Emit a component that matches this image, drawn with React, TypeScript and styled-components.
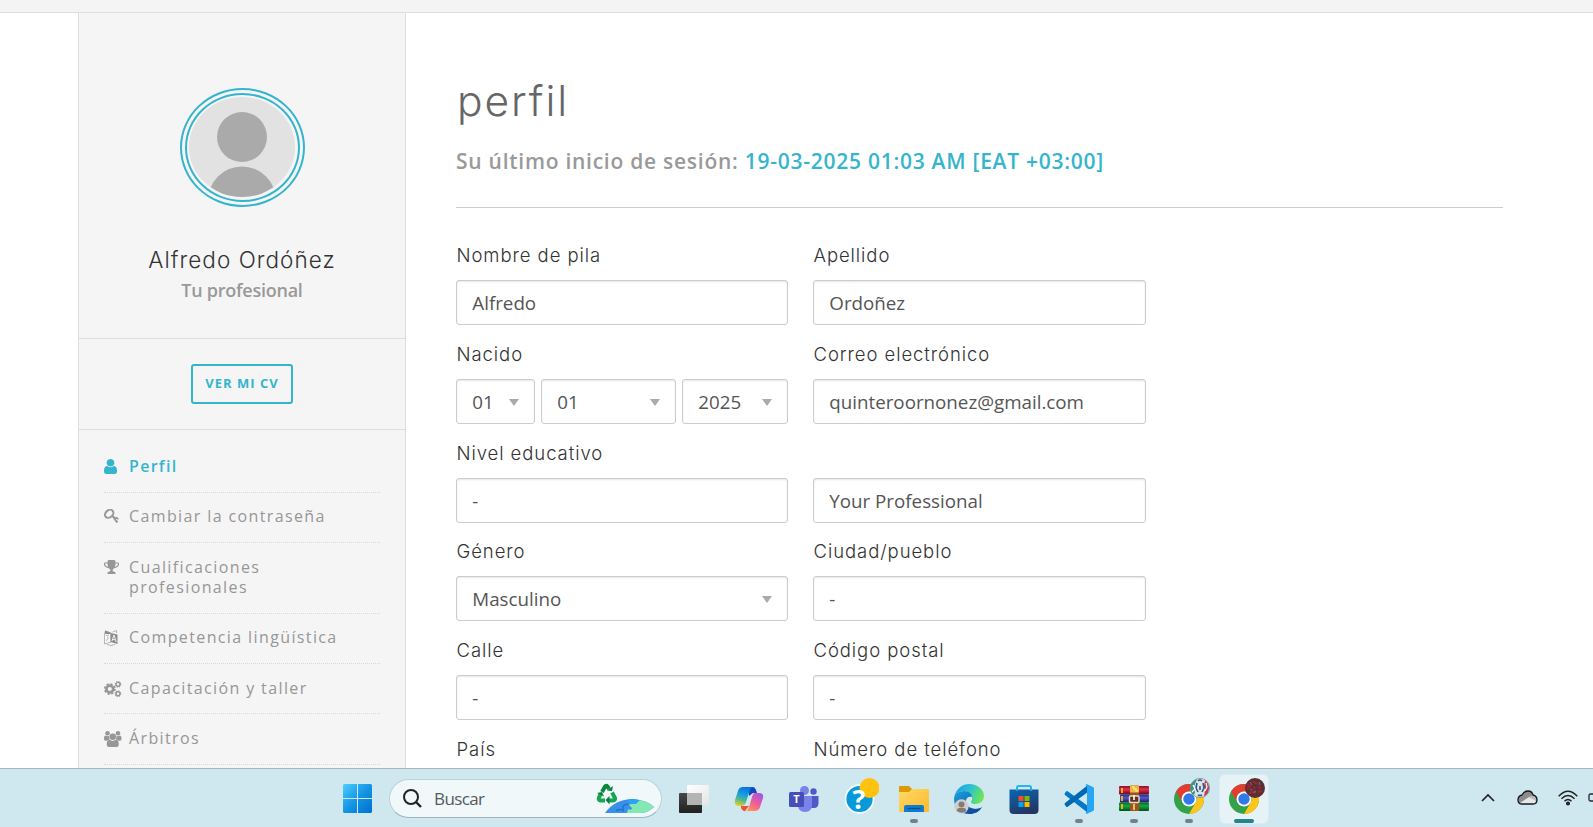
import React from "react";
import styled, { createGlobalStyle } from "styled-components";

const accent = "#35b5cd";
const line = "#dedede";
const display = `Inter, "Open Sans", sans-serif`;

const GlobalStyle = createGlobalStyle`
  * { box-sizing: border-box; }
  body { margin: 0; background: #fff; font-family: "Open Sans", "Noto Sans", sans-serif; overflow: hidden; }
  svg { display: block; flex: none; }
`;

const Screen = styled.div`
  display: flex;
  flex-direction: column;
  width: 1593px;
  height: 827px;
  overflow: hidden;
`;

const TopStrip = styled.header`
  flex: none;
  height: 13px;
  background: #f4f4f4;
  border-bottom: 1px solid ${line};
`;

const Page = styled.div`
  flex: 1;
  min-height: 0;
  display: flex;
  overflow: hidden;
  padding-left: 78px;
`;

const Sidebar = styled.aside`
  flex: none;
  width: 328px;
  height: 800px;
  background: #f5f5f5;
  border: solid ${line};
  border-width: 0 1px;
`;

const ProfileCard = styled.section`
  height: 326px;
  padding-top: 75px;
  display: flex;
  flex-direction: column;
  align-items: center;
  border-bottom: 1px solid ${line};
`;

const OuterRing = styled.div`
  width: 125px;
  height: 119px;
  padding: 3px;
  border: 2px solid ${accent};
  border-radius: 50%;
`;

const InnerRing = styled.div`
  width: 115px;
  height: 109px;
  padding: 2px;
  border: 2px solid ${accent};
  border-radius: 50%;
`;

const PersonName = styled.h2`
  margin: 36px 0 0;
  font: 300 22.5px/34px ${display};
  letter-spacing: 1.03px;
  color: #333;
`;

const PersonRole = styled.p`
  margin: -1px 0 0;
  font-size: 18px;
  font-weight: 600;
  line-height: 28px;
  letter-spacing: -0.25px;
  color: #999;
`;

const CvSection = styled.section`
  height: 91px;
  display: flex;
  align-items: center;
  justify-content: center;
  border-bottom: 1px solid ${line};
`;

const CvButton = styled.button`
  width: 102px;
  height: 40px;
  padding: 0 0 2px;
  border: 2px solid ${accent};
  border-radius: 3px;
  background: transparent;
  color: ${accent};
  font: 700 13px/18px "Open Sans", sans-serif;
  letter-spacing: 1px;
  white-space: nowrap;
`;

const Menu = styled.nav`
  padding: 12.4px 25px 0;
`;

const MenuItem = styled.a<{ $active?: boolean }>`
  display: grid;
  grid-template-columns: 25px 1fr;
  align-items: start;
  padding: 13.6px 0 15.8px;
  border-bottom: 1px dotted #d8d8d8;
  color: ${(p) => (p.$active ? accent : "#979797")};
  font-size: 16px;
  line-height: 20px;
  font-weight: ${(p) => (p.$active ? 600 : 400)};
  letter-spacing: ${(p) => (p.$active ? 1.3 : 1.38)}px;
`;

const MenuIcon = styled.span`
  display: block;
  padding-top: 3px;
`;

const Main = styled.main`
  width: 1097px;
  padding: 62px 0 0 50px;
`;

const Title = styled.h1`
  margin: 0;
  padding-left: 1px;
  font: 300 42.5px/52px ${display};
  letter-spacing: 1.9px;
  color: #666;
`;

const LastLogin = styled.p`
  margin: 19px 0 0;
  font-size: 21px;
  line-height: 30px;
  font-weight: 600;
  letter-spacing: 0.74px;
  color: #999;
  white-space: nowrap;
`;

const LoginTime = styled.span`
  color: ${accent};
`;

const Rule = styled.hr`
  margin: 31px 0 0;
  border: 0;
  border-top: 1px solid #ccc;
`;

const Form = styled.form`
  display: grid;
  grid-template-columns: 332px 333px;
  column-gap: 25px;
  padding-top: 32px;
`;

const Field = styled.div<{ $short?: boolean }>`
  height: ${(p) => (p.$short ? 98 : 99)}px;
`;

const Label = styled.label`
  display: block;
  height: 40px;
  padding-left: 0.5px;
  font: 300 18.5px/30px ${display};
  letter-spacing: 0.93px;
  color: #333;
`;

const Group = styled.div`
  display: flex;
  gap: 6px;
`;

const Control = styled.div<{ $width?: number }>`
  display: flex;
  align-items: center;
  justify-content: space-between;
  width: ${(p) => (p.$width ? `${p.$width}px` : "100%")};
  height: 45px;
  padding: 0 15px 0 15.3px;
  border: 1px solid #ccc;
  border-radius: 3px;
  box-shadow: inset 0 1px 2px rgba(0, 0, 0, 0.1);
  color: #555;
  font-size: 18.75px;
  line-height: 26px;
`;

const Arrow = styled.span`
  margin-top: 2px;
  border: solid transparent;
  border-width: 7px 5px 0;
  border-top-color: #aaa;
`;

const Taskbar = styled.footer`
  flex: none;
  height: 59px;
  display: flex;
  align-items: center;
  padding: 1px 0 0 343px;
  background: #cfe7ee;
  border-top: 1px solid #a7b6bb;
`;

const SearchBox = styled.div`
  display: flex;
  align-items: center;
  width: 273.5px;
  height: 39px;
  margin: 0 4.5px 0 16.5px;
  padding: 0 6px 0 13.5px;
  border: 1px solid #b9d3da;
  border-bottom-color: #9eb4bb;
  border-radius: 20px;
  background: #f0f8fa;
`;

const SearchText = styled.span`
  flex: 1;
  padding-left: 12px;
  font: 400 17px/24px "Open Sans", sans-serif;
  letter-spacing: -0.6px;
  color: #555b5e;
`;

const Slot = styled.div`
  position: relative;
  flex: none;
  width: 55px;
  height: 48px;
  display: flex;
  align-items: center;
  justify-content: center;
`;

const ActiveTile = styled(Slot)`
  width: 48px;
  margin: 0 3.5px;
  border-radius: 5px;
  background: #e6f2f6;
  box-shadow: 0 0 0 1px #dcebf0;
`;

const Indicator = styled.i<{ $active?: boolean }>`
  position: absolute;
  bottom: 0;
  left: 50%;
  width: ${(p) => (p.$active ? 20 : 8)}px;
  height: 4px;
  border-radius: 2px;
  transform: translateX(-50%);
  background: ${(p) => (p.$active ? "#25838f" : "#748287")};
`;

const Tray = styled.div`
  display: flex;
  align-items: center;
  margin-left: auto;
  padding-bottom: 2px;
`;

const TrayIcon = styled.span<{ $gap: number }>`
  margin-left: ${(p) => p.$gap}px;
`;

const UserIcon = () => (
  <svg width="13" height="15" viewBox="256 128 1280 1536" preserveAspectRatio="none" fill="currentColor">
    <path d="M1536 1399q0 109-62.5 187t-150.5 78h-854q-88 0-150.5-78t-62.5-187q0-85 8.5-160.5t31.5-152 58.5-131 94-89 134.5-34.5q131 128 313 128t313-128q76 0 134.5 34.5t94 89 58.5 131 31.5 152 8.5 160.5zm-256-887q0 159-112.5 271.5t-271.5 112.5-271.5-112.5-112.5-271.5 112.5-271.5 271.5-112.5 271.5 112.5 112.5 271.5z" />
  </svg>
);

const KeyIcon = () => (
  <svg width="15" height="14" viewBox="0 0 15 14" fill="currentColor">
    <ellipse cx="5.200" cy="4.800" rx="4.600" ry="3.500" fill="none" stroke="currentColor" strokeWidth="2" transform="rotate(-40 5.200 4.800)" />
    <path d="m7.800 7.500 1.400-1.300 2.500 2.400 1-.9 2.300 2-1 1-1.300-1-.7.700 2.200 2.200-1.200 1.400-.8-.3z" />
  </svg>
);

const TrophyIcon = () => (
  <svg width="15" height="14" viewBox="64 128 1664 1536" fill="currentColor">
    <path d="M522 883q-74-162-74-371h-256v96q0 78 94.5 162t235.5 113zm1078-275v-96h-256q0 209-74 371 141-29 235.5-113t94.5-162zm128-128v128q0 71-41.5 143t-112 130-173 97.5-215.5 44.5q-42 54-95 95-38 34-52.5 72.5t-14.5 89.5q0 54 30.5 91t97.5 37q75 0 133.5 45.5t58.5 114.5v64q0 14-9 23t-23 9h-832q-14 0-23-9t-9-23v-64q0-69 58.5-114.5t133.5-45.5q67 0 97.5-37t30.5-91q0-51-14.5-89.5t-52.5-72.5q-53-41-95-95-113-5-215.5-44.5t-173-97.5-112-130-41.5-143v-128q0-40 28-68t68-28h288v-96q0-66 47-113t113-47h576q66 0 113 47t47 113v96h288q40 0 68 28t28 68z" />
  </svg>
);

const LanguageIcon = () => (
  <svg width="14" height="16" viewBox="0 0 14 16" fill="none" stroke="#a5a5ad" strokeWidth=".8">
    <path d="M1.5 1 7 3v9l-6.500 2V3.500z" fill="#f7f7f7" />
    <path d="M1 .5 6.500 2.500v1.500L1 4z" fill="#8d8d8d" stroke="none" />
    <path d="M6.500 3 13.500 4.500v9.500L6.500 12z" fill="#8d8d8d" stroke="none" />
    <path d="m8 11 2-6 2.200 7M8.700 9.200l3 .7" stroke="#eee" strokeWidth="1" />
    <path d="M2 5.500 5 5M3 7c2 0 1.500 2.500-1 3.500M8.500 2 12.500.500V3M3 14.500q4 2 8 0" />
  </svg>
);

const GearsIcon = () => (
  <svg width="17.500" height="16" viewBox="0 0 17.500 16" fill="none" stroke="currentColor">
    <circle cx="5.800" cy="8" r="3.400" strokeWidth="2.700" />
    <circle cx="5.800" cy="8" r="5" strokeWidth="1.800" strokeDasharray="2.200 1.727" />
    <circle cx="14" cy="3.300" r="1.900" strokeWidth="1.400" />
    <circle cx="14" cy="3.300" r="2.800" strokeWidth="1.100" strokeDasharray="1.200 .999" />
    <circle cx="14" cy="12.700" r="1.900" strokeWidth="1.400" />
    <circle cx="14" cy="12.700" r="2.800" strokeWidth="1.100" strokeDasharray="1.200 .999" />
  </svg>
);

const UsersIcon = () => (
  <svg width="17.500" height="16" viewBox="0 0 17.500 16" fill="currentColor">
    <circle cx="3.500" cy="2.300" r="2.300" />
    <circle cx="14" cy="2.300" r="2.300" />
    <path d="M0 7q0-2.500 1.500-2.500 2 1.200 3.700.3Q4.500 7 6 8.500q-2 0-3 1.200H1.500Q0 9.700 0 8zM17.500 7q0-2.500-1.500-2.500-2 1.200-3.700.3.700 2.200-.8 3.700 2 0 3 1.200H16q1.500 0 1.500-1.700z" />
    <circle cx="8.750" cy="5.800" r="3.300" />
    <path d="M2.700 13.500q0-4.700 2.800-4.700 3.200 2.300 6.500 0 2.800 0 2.800 4.700 0 2.500-2.200 2.500H5q-2.300 0-2.300-2.500z" />
  </svg>
);

const AvatarPicture = () => (
  <svg width="107" height="101" viewBox="0 0 107 101">
    <defs>
      <clipPath id="portrait"><ellipse cx="53" cy="50" rx="53" ry="50" /></clipPath>
    </defs>
    <g clipPath="url(#portrait)">
      <rect width="107" height="101" fill="#e2e2e2" />
      <circle cx="53" cy="40" r="25" fill="#aaa" />
      <circle cx="53" cy="103.500" r="34" fill="#aaa" />
    </g>
  </svg>
);

const WindowsLogo = () => (
  <svg width="29" height="29" viewBox="0 0 29 29">
    <defs>
      <linearGradient id="win" x1="0" y1="0" x2="1" y2="1" gradientUnits="objectBoundingBox">
        <stop stopColor="#4dcfff" /><stop offset=".5" stopColor="#1595e3" /><stop offset="1" stopColor="#0070cf" />
      </linearGradient>
    </defs>
    <path fill="url(#win)" d="M1 0h13v14H0V1zM15 0h13l1 1v13H15zM0 15h14v14H1l-1-1zM15 15h14v13l-1 1H15z" />
  </svg>
);

const SearchIcon = () => (
  <svg width="19" height="19" viewBox="0 0 19 19" fill="none" stroke="#222" strokeWidth="2">
    <circle cx="8" cy="8" r="7" /><path d="m13 13 5 5" strokeWidth="2.400" />
  </svg>
);

const EarthIcon = () => (
  <svg width="60" height="32" viewBox="0 0 60 32">
    <g fill="none" stroke="#119447" strokeWidth="4">
      <path d="m7 9 3-5.500q1.200-1.500 2.500 0L14 6" stroke="#0a8a3c" />
      <path d="m17 9.500 3 5.500q.5 2.500-2 2.500h-4" stroke="#16a653" />
      <path d="M10 17.500H5.500q-2.500-.5-1.500-3L5.500 11" stroke="#16a653" />
    </g>
    <path d="m12 7.500 5 .5 1-5zM14.500 13v8.500L10.500 17zM2 10l5-1 2 4.500z" fill="#0b7f37" />
    <clipPath id="globe"><path d="M10 30q10-14 28-14 14 1 21 8-5 5-12 6z" /></clipPath>
    <g clipPath="url(#globe)">
      <path d="M8 14h52v18H8z" fill="#3b8fe8" />
      <path d="M46 14h14v18H29q4-2 4-6 4 2 4-1l-3-3q2-2 6-1z" fill="#85e8b2" />
      <path d="M34 14h14l-7 7q-5 0-7-2z" fill="#28a5f5" />
      <path d="M21 27.500q4-2 7 0v-4q2-3 5-2" fill="none" stroke="#1976cf" strokeWidth="1.500" />
    </g>
  </svg>
);

const TaskViewIcon = () => (
  <svg width="30" height="30" viewBox="0 0 30 30">
    <defs><linearGradient id="dark" x2="0" y2="1"><stop stopColor="#484848" /><stop offset="1" stopColor="#202020" /></linearGradient>
      <linearGradient id="light" x2="1" y2="1"><stop stopColor="#fff" /><stop offset="1" stopColor="#e4e4e4" /></linearGradient></defs>
    <rect y="9" width="23" height="20" rx="1" fill="url(#dark)" />
    <rect x="8" y="1" width="22" height="20" rx="1" fill="url(#light)" />
    <path d="M8 9h15v12H9l-1-1z" fill="#b4b4b4" />
  </svg>
);

const CopilotIcon = () => (
  <svg width="30" height="30" viewBox="0 0 30 30">
    <defs>
      <linearGradient id="cpA" x1=".6" y1="0" x2=".3" y2="1"><stop stopColor="#0d70dd" /><stop offset=".4" stopColor="#169ee5" /><stop offset=".7" stopColor="#54b98b" /><stop offset="1" stopColor="#e4cf24" /></linearGradient>
      <linearGradient id="cpB" x1=".8" y1="0" x2=".2" y2="1"><stop stopColor="#a055ed" /><stop offset=".5" stopColor="#ec5b9c" /><stop offset="1" stopColor="#ff9450" /></linearGradient>
    </defs>
    <path d="M15 3h4q2 0 3 3l1 3h-4l-4 3z" fill="#1647bd" />
    <path d="M7 22h8l-4 5q-2 1-4-3z" fill="#ef5138" />
    <path d="M9 3h10q-2 0-3 3l-4 12q-1 4-5 4H5q-5 0-4-6l3-9q1-4 5-4z" fill="url(#cpA)" />
    <path d="M21 9h4q5 0 4 5l-3 9q-1 4-6 4h-8q2-1 3-4l3-10q1-4 3-4z" fill="url(#cpB)" />
  </svg>
);

const IconLetter = styled.text`
  font: 700 11px "Open Sans", sans-serif;
  fill: #fff;
`;

const QuestionMark = styled.text`
  font: 700 27px/27px "Open Sans", sans-serif;
  fill: #fff;
`;

const TeamsIcon = () => (
  <svg width="30" height="30" viewBox="0 0 30 30">
    <circle cx="24.500" cy="7.500" r="3.200" fill="#5059c9" />
    <path d="M22 12h7.500v7q0 5-4.500 5h-3z" fill="#5059c9" />
    <circle cx="15.500" cy="6.500" r="4.500" fill="#7b83eb" />
    <path d="M9 12h14v9q0 7-7 7t-7-7z" fill="#7b83eb" />
    <rect y="8" width="15" height="15" rx="1.500" fill="#464eb8" />
    <IconLetter x="4.300" y="19.300">T</IconLetter>
  </svg>
);

const HelpIcon = () => (
  <svg width="39" height="48" viewBox="0 -3 39 48">
    <circle cx="19.500" cy="21" r="14" fill="#0799d9" stroke="#f4fbfe" strokeWidth="1.800" />
    <circle cx="29.500" cy="10" r="10" fill="#ffc20e" />
    <QuestionMark x="12.500" y="30.500">?</QuestionMark>
  </svg>
);

const FolderIcon = () => (
  <svg width="30" height="30" viewBox="0 0 30 30">
    <defs><linearGradient id="fold" x2="1" y2="1"><stop stopColor="#ffd968" /><stop offset="1" stopColor="#fdb92b" /></linearGradient></defs>
    <path d="M0 3q0-1 1-1h9l3 3v5H0z" fill="#dc9a0b" />
    <path d="M0 8h10l3-3h16q1 0 1 1v21q0 1-1 1H1q-1 0-1-1z" fill="url(#fold)" />
    <path d="M5 28v-5q0-2 2-2h16q2 0 2 2v5z" fill="#0f7bd1" />
    <path d="M8.500 24.500h13" stroke="#0b4f8e" strokeWidth="1.300" />
  </svg>
);

const EdgeIcon = () => (
  <svg width="30" height="30" viewBox="0 0 30 30">
    <defs>
      <linearGradient id="edTop" x1="0" y1=".3" x2="1" y2=".6"><stop stopColor="#18a1e5" /><stop offset=".5" stopColor="#2fc3cf" /><stop offset="1" stopColor="#72e84a" /></linearGradient>
      <linearGradient id="edLow" x1="0" y1="0" x2="1" y2="1"><stop stopColor="#1aa0e0" /><stop offset="1" stopColor="#1149a0" /></linearGradient>
    </defs>
    <path d="M0 14C2 4 9 0 15 0c9 0 15 6 15 12 0 5-4 8-9 8-4 0-5-2-3-4 1-5-3-9-8-9-6 0-9 4-10 7z" fill="url(#edTop)" />
    <path d="M0 15c0-5 5-8 10-8 5 0 8 3 8 6-2-1-6 0-6 4 0 5 5 8 10 8 3 0 5-1 6-2-3 5-8 7-13 7C7 30 0 24 0 15z" fill="url(#edLow)" />
    <path d="M12 17c-1 5 4 8 9 8 3 0 6-1 7-2-3 5-8 7-13 7-6-3-6-9-3-13z" fill="#124f9f" />
    <circle cx="7.500" cy="22.500" r="7.200" fill="#d0cdca" />
    <circle cx="7.500" cy="20.500" r="3" fill="#827b78" />
    <path d="M2.800 27q0-3 2.700-3h4q2.700 0 2.700 3-4 3.500-9.400 0z" fill="#827b78" />
  </svg>
);

const StoreIcon = () => (
  <svg width="30" height="30" viewBox="0 0 30 30">
    <defs><linearGradient id="store" x2=".4" y2="1"><stop stopColor="#0868b5" /><stop offset="1" stopColor="#233764" /></linearGradient></defs>
    <path d="M8 7V3.500Q8 2 9.500 2h11Q22 2 22 3.500V7" fill="none" stroke="#28b5ec" strokeWidth="2" />
    <path d="M.5 5.500h29V26q0 4-4 4h-21q-4 0-4-4z" fill="url(#store)" />
    <path d="M8 5v2M22 5v2" stroke="#28b5ec" strokeWidth="1.500" />
    <path d="M9.500 12h5v5h-5z" fill="#f25022" /><path d="M15.500 12h5v5h-5z" fill="#7fba00" />
    <path d="M9.500 18h5v5h-5z" fill="#00a4ef" /><path d="M15.500 18h5v5h-5z" fill="#ffb900" />
  </svg>
);

const CodeIcon = () => (
  <svg width="30" height="30" viewBox="0 0 30 30">
    <path d="M2 7.500q1-1 2 0L24 22v7L1 11q-1-1 0-2z" fill="#0079c8" />
    <path d="M2 22.500q1 1 2 0L24 8V1L1 19q-1 1 0 2z" fill="#0069b4" />
    <path d="M22.500 0 29 3q1 .5 1 1.500v21q0 1-1 1.500l-6.500 3-1-1 1.500-2V3l-1.500-2z" fill="#27a5f4" />
  </svg>
);

const RarIcon = () => (
  <svg width="30" height="30" viewBox="0 0 30 30">
    <defs>
      <linearGradient id="rr" x2="0" y2="1"><stop stopColor="#8d0c27" /><stop offset=".4" stopColor="#df3049" /><stop offset="1" stopColor="#650318" /></linearGradient>
      <linearGradient id="rb" x2="0" y2="1"><stop stopColor="#252876" /><stop offset=".4" stopColor="#5255d0" /><stop offset="1" stopColor="#1b1c58" /></linearGradient>
      <linearGradient id="rg" x2="0" y2="1"><stop stopColor="#056721" /><stop offset=".4" stopColor="#17a83f" /><stop offset="1" stopColor="#054d19" /></linearGradient>
    </defs>
    <rect y="2" width="30" height="8.500" rx="1" fill="url(#rr)" />
    <rect x="1" y="10.500" width="29" height="8" rx="1" fill="url(#rb)" />
    <rect y="18.500" width="30" height="8.500" rx="1" fill="url(#rg)" />
    <path d="M3 4v5M3 12v5M3 20v5" stroke="#f1bb18" strokeWidth="1.800" />
    <path d="M11 1.500h9v25.500h-9z" fill="#9b5420" />
    <path d="M11 1.500h9v7h-9z" fill="#eab545" />
    <path d="M13 3h2v2h2v2h2M15 20v6" stroke="#ffe277" strokeWidth="1.500" fill="none" />
    <rect x="10.500" y="12" width="9.500" height="6.500" rx="1" fill="#673112" stroke="#ddd" strokeWidth="1.400" />
    <path d="M15 11v5" stroke="#fff" strokeWidth="1.600" />
  </svg>
);

const ChromeIcon = ({ badge }: { badge: "flag" | "dark" }) => (
  <svg width="42" height="42" viewBox="0 0 42 42">
    <circle cx="21" cy="21" r="15" fill="#34a249" />
    <path d="M8 13.500A15 15 0 0 1 34 13.500H21a7.500 7.500 0 0 0-6.500 11.200z" fill="#e43c31" />
    <path d="M34 13.500A15 15 0 0 1 21 36l6.500-11.300A7.500 7.500 0 0 0 27.500 17L21 13.500z" fill="#fcc519" />
    <circle cx="21" cy="21" r="7.500" fill="#fff" />
    <circle cx="21" cy="21" r="5.700" fill="#3079e8" />
    {badge === "flag" ? (
      <g>
        <circle cx="32" cy="10" r="10" fill="#dce5e6" />
        <path d="M23 14Q20 7 27 2l2-.8-3 7 1 7-2 2z" fill="#39977a" />
        <path d="M37 2q6 5 3 13l-4 4 1-7-1-4z" fill="#bd4055" />
        <path d="m29 5-1 5 2 4M35 5l1 5-2 4M30 3q2-2 4 0M30 17q2 1 4 0M32 8v4" stroke="#30558b" strokeWidth="1.600" fill="none" />
        <path d="m25 7 2 4-3 3M38 5l1 4-2 4" stroke="#fff" strokeWidth="1.200" fill="none" />
        <circle cx="32" cy="10" r="9.600" fill="none" stroke="#667c7f" strokeWidth=".7" />
      </g>
    ) : (
      <g>
        <circle cx="32" cy="10" r="10" fill="#573035" />
        <path d="m24 11 4-4M30 3l4 3M26 16l4-3 3 2M35 14l4-1M24 6l2 1M35 9l3 1M31 9l1 2" stroke="#a32431" strokeWidth="2" fill="none" />
        <path d="m27 4 2 3M30 15l3-2M36 4l1 3M27 12l2-1" stroke="#77635f" strokeWidth="1.200" />
      </g>
    )}
  </svg>
);

const ChevronUp = () => (
  <svg width="14" height="10" viewBox="0 0 14 10" fill="none" stroke="#202527" strokeWidth="1.700"><path d="m1 8 6-6 6 6" /></svg>
);

const CloudIcon = () => (
  <svg width="21" height="15" viewBox="0 0 21 15">
    <path d="M5 14Q1 14 1 10t4-5q2-4 6-4t5 4q4 1 4 5t-4 4z" fill="#8d8b8b" />
    <path d="m3 13 9-6 7 3q0 4-3 4H5z" fill="#e8e8e8" />
    <path d="m12 7 4-2q4 1 3 6z" fill="#bbb" />
    <path d="M5 14Q1 14 1 10t4-5q2-4 6-4t5 4q4 1 4 5t-4 4z" fill="none" stroke="#171a1b" strokeWidth="1.300" />
  </svg>
);

const WifiIcon = () => (
  <svg width="20" height="16" viewBox="0 0 20 16" fill="none" stroke="#202527" strokeWidth="1.500">
    <path d="M.7 6.200Q10-3.800 19.300 6.200M3.500 8.800q6.500-6.500 13 0M6.500 11.200q3.500-3.500 7 0" />
    <circle cx="10" cy="13.500" r="1.300" fill="#202527" />
  </svg>
);

const BatteryIcon = () => (
  <svg width="5" height="9" viewBox="0 0 5 9" fill="none" stroke="#202527" strokeWidth="1.300"><path d="M6 1H2.500Q1 1 1 2.500v4Q1 8 2.500 8H6" /></svg>
);

const menu = [
  { text: "Perfil", Icon: UserIcon, active: true },
  { text: "Cambiar la contraseña", Icon: KeyIcon },
  { text: "Cualificaciones profesionales", Icon: TrophyIcon },
  { text: "Competencia lingüística", Icon: LanguageIcon },
  { text: "Capacitación y taller", Icon: GearsIcon },
  { text: "Árbitros", Icon: UsersIcon },
];

interface FieldProps {
  label: string;
  value: string;
  select?: boolean;
  short?: boolean;
}

const TextField = ({ label, value, select, short }: FieldProps) => (
  <Field $short={short}>
    <Label>{label}</Label>
    <Control>{value}{select && <Arrow />}</Control>
  </Field>
);

export default function App() {
  return (
    <Screen>
      <GlobalStyle />
      <TopStrip />
      <Page>
        <Sidebar>
          <ProfileCard>
            <OuterRing><InnerRing><AvatarPicture /></InnerRing></OuterRing>
            <PersonName>Alfredo Ordóñez</PersonName>
            <PersonRole>Tu profesional</PersonRole>
          </ProfileCard>
          <CvSection><CvButton>VER MI CV</CvButton></CvSection>
          <Menu>
            {menu.map(({ text, Icon, active }) => (
              <MenuItem key={text} $active={active}>
                <MenuIcon><Icon /></MenuIcon>
                <span>{text}</span>
              </MenuItem>
            ))}
          </Menu>
        </Sidebar>
        <Main>
          <Title>perfil</Title>
          <LastLogin>Su último inicio de sesión: <LoginTime>19-03-2025 01:03 AM [EAT +03:00]</LoginTime></LastLogin>
          <Rule />
          <Form>
            <TextField label="Nombre de pila" value="Alfredo" />
            <TextField label="Apellido" value="Ordoñez" />
            <Field>
              <Label>Nacido</Label>
              <Group>
                <Control $width={79}>01<Arrow /></Control>
                <Control $width={135}>01<Arrow /></Control>
                <Control $width={106}>2025<Arrow /></Control>
              </Group>
            </Field>
            <TextField label="Correo electrónico" value="quinteroornonez@gmail.com" />
            <TextField label="Nivel educativo" value="-" short />
            <TextField label="" value="Your Professional" short />
            <TextField label="Género" value="Masculino" select />
            <TextField label="Ciudad/pueblo" value="-" />
            <TextField label="Calle" value="-" />
            <TextField label="Código postal" value="-" />
            <TextField label="País" value="" />
            <TextField label="Número de teléfono" value="" />
          </Form>
        </Main>
      </Page>
      <Taskbar>
        <WindowsLogo />
        <SearchBox><SearchIcon /><SearchText>Buscar</SearchText><EarthIcon /></SearchBox>
        <Slot><TaskViewIcon /></Slot>
        <Slot><CopilotIcon /></Slot>
        <Slot><TeamsIcon /></Slot>
        <Slot><HelpIcon /></Slot>
        <Slot><FolderIcon /><Indicator /></Slot>
        <Slot><EdgeIcon /></Slot>
        <Slot><StoreIcon /></Slot>
        <Slot><CodeIcon /><Indicator /></Slot>
        <Slot><RarIcon /><Indicator /></Slot>
        <Slot><ChromeIcon badge="flag" /><Indicator /></Slot>
        <ActiveTile><ChromeIcon badge="dark" /><Indicator $active /></ActiveTile>
        <Tray>
          <TrayIcon $gap={0}><ChevronUp /></TrayIcon>
          <TrayIcon $gap={22}><CloudIcon /></TrayIcon>
          <TrayIcon $gap={20}><WifiIcon /></TrayIcon>
          <TrayIcon $gap={10}><BatteryIcon /></TrayIcon>
        </Tray>
      </Taskbar>
    </Screen>
  );
}
